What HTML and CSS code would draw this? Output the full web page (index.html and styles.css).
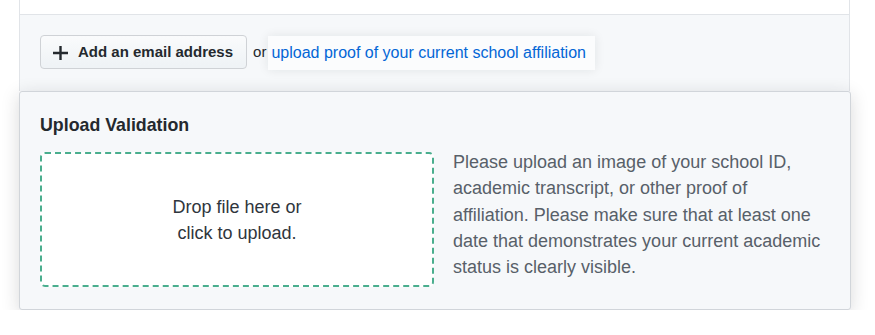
FILE: index.html
```html
<!DOCTYPE html>
<html lang="en">
<head>
<meta charset="utf-8">
<title>Upload Validation</title>
<link rel="stylesheet" href="styles.css">
</head>
<body>
<div class="box">
  <div class="box-top"></div>
  <div class="box-row">
    <button class="btn" type="button">
      <svg class="plus" viewBox="0 0 15 14" width="15" height="14" aria-hidden="true"><path d="M7.5 0v14M0 7h15" stroke="#24292e" stroke-width="2.4" fill="none"/></svg>
      <span>Add an email address</span>
    </button>
    <span class="or">or</span>
    <span class="spot"><a href="#" class="link">upload proof of your current school affiliation</a></span>
  </div>
</div>
<div class="panel">
  <h3 class="panel-title">Upload Validation</h3>
  <div class="panel-body">
    <div class="dropzone">Drop file here or<br>click to upload.</div>
    <p class="note">Please upload an image of your school ID, academic transcript, or other proof of affiliation. Please make sure that at least one date that demonstrates your current academic status is clearly visible.</p>
  </div>
</div>
</body>
</html>
```
FILE: styles.css
```css
* { box-sizing: border-box; }
body {
  margin: 0;
  background: #ffffff;
  font-family: "Liberation Sans", Arial, Helvetica, sans-serif;
  color: #24292e;
}
.box {
  margin-left: 19px;
  width: 831px;
  border-left: 1px solid #e1e4e8;
  border-right: 1px solid #e1e4e8;
}
.box-top {
  height: 15px;
  background: #fff;
  border-bottom: 1px solid #e1e4e8;
}
.box-row {
  background: #f6f8fa;
  height: 76px;
  padding: 20px 20px 0 20px;
  display: flex;
  align-items: flex-start;
}
.btn {
  display: flex;
  align-items: center;
  height: 34px;
  padding: 0 13px 0 12px;
  font-family: inherit;
  font-size: 15px;
  font-weight: bold;
  line-height: 20px;
  color: #24292e;
  background: linear-gradient(#fafbfc, #eff3f6 90%);
  border: 1px solid #cfd2d6;
  border-radius: 4px;
}
.plus { margin-right: 10px; flex: none; margin-top: 1px; }
.or {
  font-size: 15px;
  line-height: 34px;
  margin: 0 2px 0 6px;
  color: #24292e;
}
.spot {
  display: block;
  margin-top: 1px;
  height: 34px;
  padding: 7px 9px 7px 3px;
  background: #fbfcfd;
  box-shadow: 0 0 10px rgba(27, 31, 35, 0.09);
}
.link {
  font-size: 16px;
  line-height: 20px;
  color: #0366d6;
  text-decoration: none;
}
.panel {
  margin-left: 19px;
  width: 832px;
  background: #f6f8fa;
  border: 1px solid #d1d5da;
  border-radius: 3px;
  box-shadow: 0 4px 18px rgba(27, 31, 35, 0.17);
  padding: 20px 20px 22px 20px;
}
.panel-title {
  margin: 0 0 14px 0;
  font-size: 17.8px;
  line-height: 26px;
  font-weight: bold;
  color: #24292e;
}
.panel-body {
  display: flex;
  gap: 19px;
  align-items: flex-start;
}
.dropzone {
  flex: none;
  width: 394px;
  height: 135px;
  border: 2px dashed #4aae8e;
  border-radius: 5px;
  background: #ffffff;
  display: flex;
  align-items: center;
  justify-content: center;
  text-align: center;
  font-size: 18px;
  line-height: 26px;
  color: #2f363d;
}
.note {
  flex: none;
  width: 371px;
  margin: -3px 0 0 0;
  font-size: 18px;
  line-height: 26.3px;
  color: #586069;
}
```
